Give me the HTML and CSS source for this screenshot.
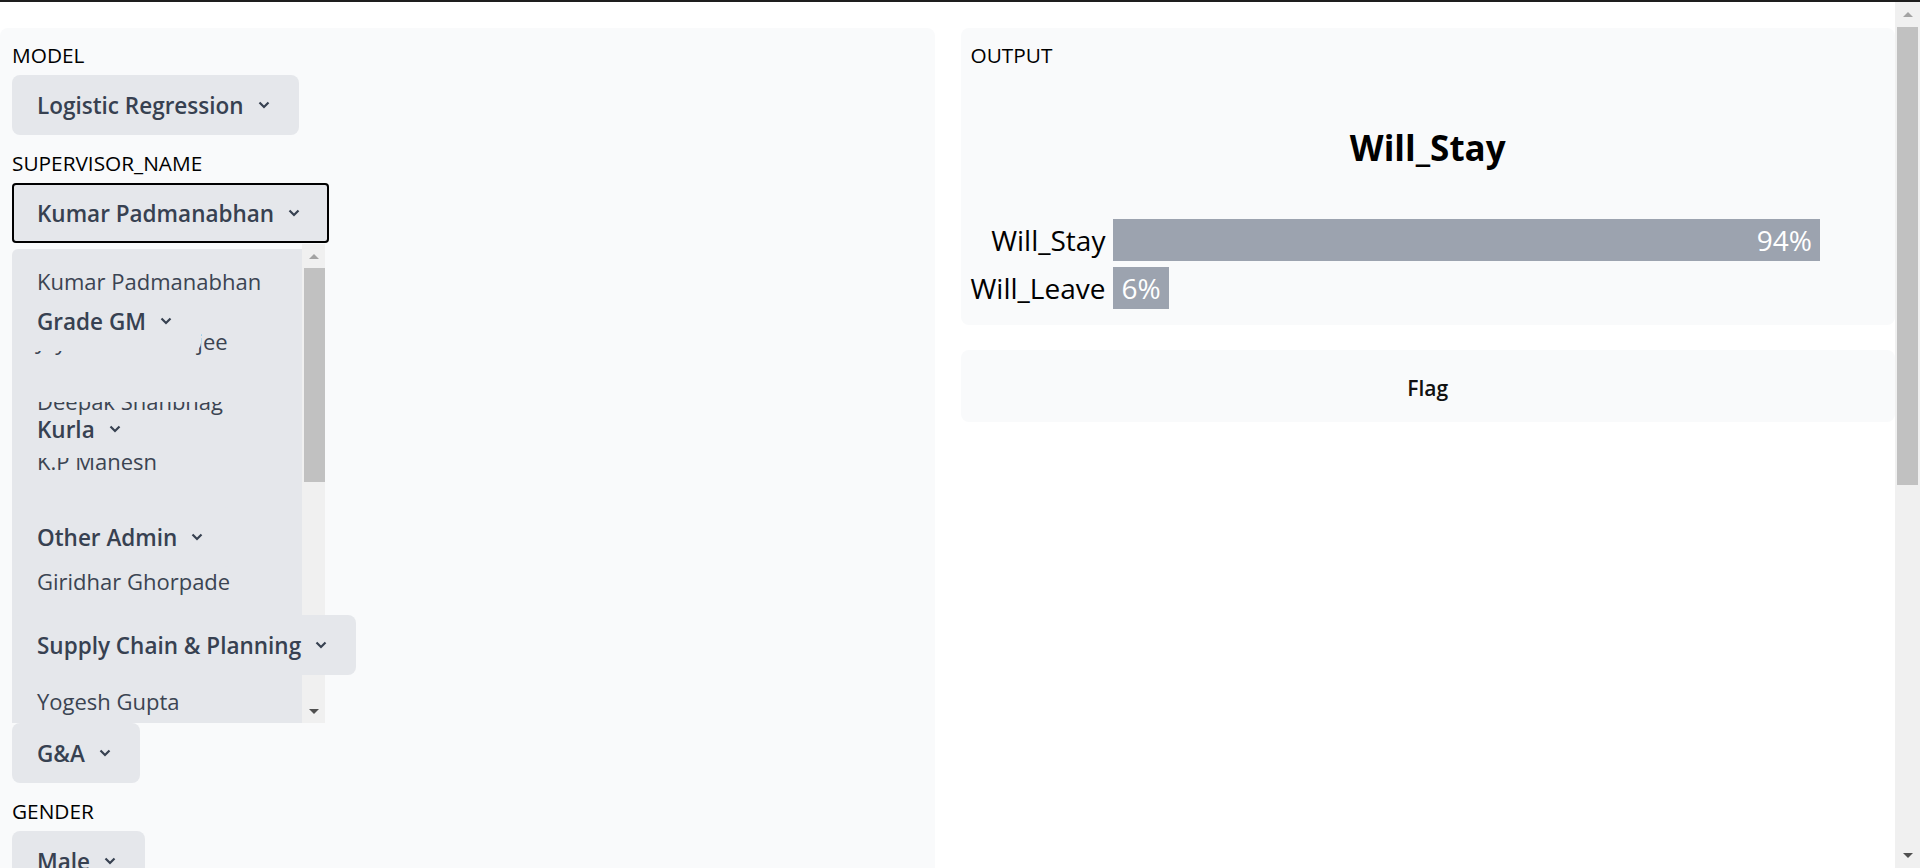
FILE: index.html
```html
<!DOCTYPE html>
<html lang="en">
<head>
    <meta charset="UTF-8">
    <meta name="viewport" content="width=device-width, initial-scale=1.0">
    <title>Attrition Predictor</title>
    <link rel="stylesheet" href="styles.css">
</head>
<body>
    <div class="page">
        <main class="app">
            <section class="panel inputs">
                <div class="field">
                    <label class="label">MODEL</label>
                    <div class="select"><span>Logistic Regression</span><svg class="chev" viewBox="0 0 12 8"><path d="M1.5 1.5L6 6l4.5-4.5"/></svg></div>
                </div>

                <div class="field has-popup">
                    <label class="label">SUPERVISOR_NAME</label>
                    <div class="select open"><span>Kumar Padmanabhan</span><svg class="chev" viewBox="0 0 12 8"><path d="M1.5 1.5L6 6l4.5-4.5"/></svg></div>
                    <div class="popup">
                        <ul class="options">
                            <li>Kumar Padmanabhan</li>
                            <li>Jayanta Mukherjee</li>
                            <li class="cut deep">Deepak Shanbhag</li>
                            <li class="cut">K.P Mahesh</li>
                            <li>Anil Rao</li>
                            <li>Giridhar Ghorpade</li>
                            <li>Sunil Nair</li>
                            <li>Yogesh Gupta</li>
                        </ul>
                        <div class="vscroll small">
                            <div class="arrow up"></div>
                            <div class="thumb"></div>
                            <div class="arrow down"></div>
                        </div>
                    </div>
                </div>

                <div class="field">
                    <label class="label">GRADE</label>
                    <div class="select"><span>Grade GM</span><svg class="chev" viewBox="0 0 12 8"><path d="M1.5 1.5L6 6l4.5-4.5"/></svg></div>
                </div>
                <div class="field">
                    <label class="label">LOCATION</label>
                    <div class="select ghost"><span>Kurla</span><svg class="chev" viewBox="0 0 12 8"><path d="M1.5 1.5L6 6l4.5-4.5"/></svg></div>
                </div>
                <div class="field">
                    <label class="label">DEPT</label>
                    <div class="select"><span>Other Admin</span><svg class="chev" viewBox="0 0 12 8"><path d="M1.5 1.5L6 6l4.5-4.5"/></svg></div>
                </div>
                <div class="field">
                    <label class="label">FUNCTION</label>
                    <div class="select"><span>Supply Chain &amp; Planning</span><svg class="chev" viewBox="0 0 12 8"><path d="M1.5 1.5L6 6l4.5-4.5"/></svg></div>
                </div>
                <div class="field">
                    <label class="label">BU</label>
                    <div class="select"><span>G&amp;A</span><svg class="chev" viewBox="0 0 12 8"><path d="M1.5 1.5L6 6l4.5-4.5"/></svg></div>
                </div>
                <div class="field">
                    <label class="label">GENDER</label>
                    <div class="select"><span>Male</span><svg class="chev" viewBox="0 0 12 8"><path d="M1.5 1.5L6 6l4.5-4.5"/></svg></div>
                </div>
            </section>

            <div class="outputs">
                <section class="panel output">
                    <div class="label">OUTPUT</div>
                    <h2 class="verdict">Will_Stay</h2>
                    <div class="chart">
                        <span class="bar-label">Will_Stay</span>
                        <div class="track"><div class="bar" style="width: 94%">94%</div></div>
                        <span class="bar-label">Will_Leave</span>
                        <div class="track"><div class="bar" style="width: 6%">6%</div></div>
                    </div>
                </section>
                <button class="panel flag">Flag</button>
            </div>
        </main>

        <div class="vscroll page-scroll">
            <div class="arrow up"></div>
            <div class="thumb"></div>
            <div class="arrow down"></div>
        </div>
    </div>
</body>
</html>
```

FILE: styles.css
```css
html, body {
    margin: 0;
    height: 100%;
    overflow: hidden;
}
body {
    border-top: 2px solid #1e1e1e;
    box-sizing: border-box;
    background: #fff;
    font-family: "Open Sans", "Noto Sans", sans-serif;
    color: #000;
}
.page {
    display: flex;
    height: 866px;
}
.app {
    flex: 1;
    display: grid;
    grid-template-columns: 1fr 1fr;
    column-gap: 26px;
    align-items: start;
    padding-top: 26px;
}
.panel {
    background: #f9fafb;
    border-radius: 8px;
}

/* inputs */
.inputs {
    padding: 13px 12px;
}
.field {
    margin-bottom: 14px;
}
.has-popup {
    position: relative;
}
.label {
    display: block;
    font-size: 20.8px;
    line-height: 28px;
    margin-bottom: 6px;
}
.select {
    position: relative;
    z-index: 2;
    display: inline-flex;
    align-items: center;
    gap: 14px;
    height: 60px;
    box-sizing: border-box;
    padding: 0 29px 0 25px;
    background: #e5e7eb;
    border-radius: 8px;
    color: #374151;
    font-size: 22.5px;
    font-weight: 600;
}
.select span {
    line-height: 30px;
    padding-top: 2px;
}
.select.open {
    border-radius: 4px;
    box-shadow: inset 0 0 0 2px #000;
}
.select.ghost {
    background: transparent;
}
.chev {
    width: 12px;
    height: 8px;
    fill: none;
    stroke: #374151;
    stroke-width: 2.2;
}

/* open dropdown list */
.popup {
    position: absolute;
    z-index: 1;
    top: calc(100% + 1px);
    left: 0;
    width: 313px;
    height: 479px;
    display: flex;
}
.options {
    flex: 1;
    list-style: none;
    margin: 5px 0 0;
    padding: 0;
    background: #e5e7eb;
    border-top-left-radius: 6px;
    overflow: hidden;
}
.options li {
    height: 60px;
    line-height: 64px;
    padding-left: 25px;
    color: #3b4452;
    font-size: 22px;
    white-space: nowrap;
}
.options li.cut {
    clip-path: inset(29px 0 0 0);
}
.options li.cut.deep {
    clip-path: inset(33px 0 0 0);
}

/* scrollbars */
.vscroll {
    display: flex;
    flex-direction: column;
    background: #f0f0f0;
}
.vscroll .arrow {
    height: 24px;
    display: flex;
    align-items: center;
    justify-content: center;
}
.vscroll .arrow::after {
    content: "";
    border-left: 5px solid transparent;
    border-right: 5px solid transparent;
}
.vscroll .arrow.up::after {
    border-bottom: 5px solid #a3a3a3;
}
.vscroll .arrow.down {
    margin-top: auto;
}
.vscroll .arrow.down::after {
    border-top: 5px solid #505050;
}
.vscroll .thumb {
    background: #c1c1c1;
}
.vscroll.small {
    width: 23px;
}
.vscroll.small .thumb {
    height: 214px;
    margin-left: 2px;
}
.page-scroll {
    width: 25px;
}
.page-scroll .arrow {
    height: 25px;
}
.page-scroll .thumb {
    height: 458px;
    margin: 0 2px;
}

/* outputs */
.outputs {
    display: flex;
    flex-direction: column;
    gap: 25px;
}
.output {
    padding: 13px 10px 16px;
}
.verdict {
    margin: 57px 0 0;
    font-size: 35px;
    line-height: 44px;
    font-weight: 700;
    text-align: center;
}
.chart {
    display: grid;
    grid-template-columns: auto 1fr;
    column-gap: 8px;
    row-gap: 6px;
    margin-top: 49px;
    padding-right: 20px;
}
.bar-label {
    justify-self: end;
    font-size: 28px;
    line-height: 42px;
}
.track {
    height: 42px;
}
.bar {
    height: 100%;
    min-width: fit-content;
    box-sizing: border-box;
    padding: 0 8px;
    display: flex;
    justify-content: flex-end;
    background: #9ca3af;
    color: #fff;
    font-size: 28px;
    line-height: 42px;
}
.flag {
    border: none;
    padding: 24px 0 20px;
    font-family: inherit;
    font-size: 21px;
    line-height: 28px;
    font-weight: 600;
    color: #111;
    cursor: pointer;
}
```
